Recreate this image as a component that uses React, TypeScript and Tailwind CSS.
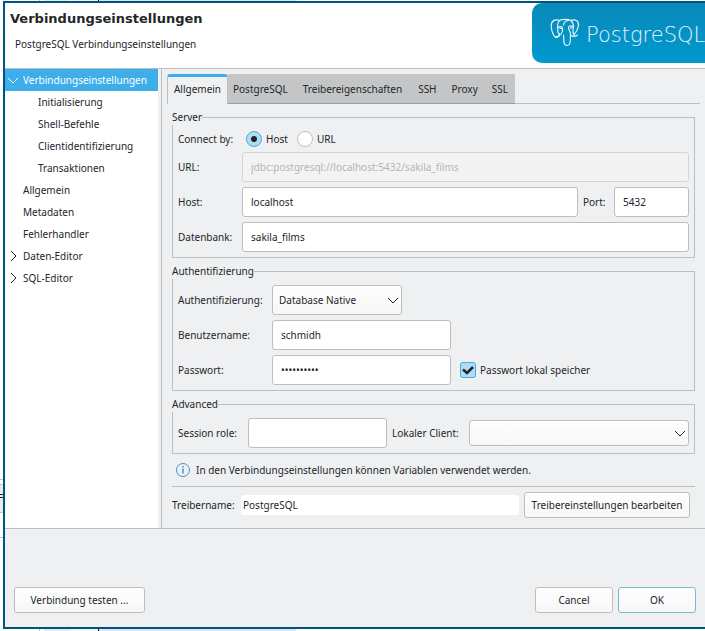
import { useState } from "react";
import type { ReactNode } from "react";
import { clsx } from "clsx";

const inputClass =
  "h-[30px] min-w-0 rounded-[3px] border border-[#bcbebf] bg-white px-2 text-[#232629] outline-none";
const buttonClass =
  "h-[26px] shrink-0 rounded-[3px] border bg-linear-to-b from-[#fefefe] to-[#f7f7f7] text-center whitespace-nowrap";

type TreeItem = { label: string; depth: number; arrow?: "open" | "closed" };

const tree: TreeItem[] = [
  { label: "Verbindungseinstellungen", depth: 0, arrow: "open" },
  { label: "Initialisierung", depth: 1 },
  { label: "Shell-Befehle", depth: 1 },
  { label: "Clientidentifizierung", depth: 1 },
  { label: "Transaktionen", depth: 1 },
  { label: "Allgemein", depth: 0 },
  { label: "Metadaten", depth: 0 },
  { label: "Fehlerhandler", depth: 0 },
  { label: "Daten-Editor", depth: 0, arrow: "closed" },
  { label: "SQL-Editor", depth: 0, arrow: "closed" },
];

const tabs = ["Allgemein", "PostgreSQL", "Treibereigenschaften", "SSH", "Proxy", "SSL"];

function Chevron({ open }: { open: boolean }) {
  return (
    <svg width="12" height="12" viewBox="0 0 12 12" fill="none" stroke="currentColor" aria-hidden="true">
      <path d={open ? "M1 4 L6 9 L11 4" : "M4 1 L9 6 L4 11"} />
    </svg>
  );
}

function Elephant() {
  return (
    <svg width="30" height="30" viewBox="0 0 30 30" fill="none" stroke="#e3f4fb" strokeWidth="1.2" strokeLinecap="round" aria-hidden="true">
      <path d="M9.500 2.500C5 .5 1 3 1.200 8c.3 4 1.800 9 4 11 1.800 1.500 3-1 4.300-3" />
      <path d="M9.500 2.500C12 1 18 1 21 2.500c4-1.800 8 0 7.500 5-.5 4-2.500 7-4.500 9.500" />
      <path d="M9.500 2.500C7.500 5 7.300 8 7.800 11c.2 2-1 3.500 1.700 5 1.500 1 0 3-3.500 2.500" />
      <path d="M21 2.500c2.500 3 3.200 6 2 9-.3 2 0 4 1.200 5.500" />
      <path d="M8 9.500c1.500-1.200 4-1.200 4.500.5.5 2 0 4-1.500 6" />
      <path d="M13.500 17c.3 3 0 6 .8 8.500 1 3 5.200 2.500 5.700-.5.400-3 .5-5 .5-8" />
      <path d="M13.500 7c.5-2.500 2.500-4.500 5-4.500" />
      <path d="M23 8.500c-2.500-1.300-4.800-.5-4.500 1.500.3 2 2.500 4 2 7 2 1.800 5 1.500 7 .2" />
      <path d="M10 10.500h1.500M20.500 9.800h1.500" />
    </svg>
  );
}

function Group({ title, children }: { title: string; children: ReactNode }) {
  return (
    <fieldset className="min-w-0 border border-[#bcbebf] px-[5px] pb-[5px]">
      <legend className="-ml-1.5 h-[15px] leading-[15px]">{title}</legend>
      {children}
    </fieldset>
  );
}

function Dropdown({ id, value, className }: { id: string; value: string; className: string }) {
  return (
    <div className={clsx("grid items-center", className)}>
      <select
        id={id}
        defaultValue={value}
        className="col-start-1 row-start-1 h-full w-full appearance-none rounded-[3px] border border-[#bcbebf] bg-linear-to-b from-[#fefefe] to-[#f7f7f7] px-1.5"
      >
        <option>{value}</option>
      </select>
      <span className="pointer-events-none col-start-1 row-start-1 mr-[3px] justify-self-end">
        <Chevron open />
      </span>
    </div>
  );
}

function Radio({ label, checked, onChange }: { label: string; checked: boolean; onChange: () => void }) {
  return (
    <label className="flex items-center gap-1">
      <span className="grid place-items-center">
        <input
          type="radio"
          name="connect-by"
          checked={checked}
          onChange={onChange}
          className="peer col-start-1 row-start-1 size-4 appearance-none rounded-full border border-[#bcbebf] bg-white checked:border-[#3daee9] checked:bg-[#b3dcf2]"
        />
        <span className="pointer-events-none col-start-1 row-start-1 hidden size-1.5 rounded-full bg-[#232629] peer-checked:block" />
      </span>
      {label}
    </label>
  );
}

function Header() {
  return (
    <header className="flex h-[66px] shrink-0 justify-between overflow-hidden border-b border-[#bcbebf] bg-white">
      <div className="pl-[5px] pt-2">
        <h1 className="font-['DejaVu_Sans',sans-serif] text-[13px] leading-4 font-bold">Verbindungseinstellungen</h1>
        <p className="mt-[9px] pl-[5px] leading-4">PostgreSQL Verbindungseinstellungen</p>
      </div>
      <div className="flex h-[60px] w-[173px] items-center gap-1.5 overflow-hidden rounded-l-[10px] bg-linear-to-b from-[#088ab8] to-[#0099d0] pl-[18px] text-[#e3f4fb]">
        <span className="shrink-0">
          <Elephant />
        </span>
        <span className="pt-1 font-['DejaVu_Sans',sans-serif] text-[21px] leading-6 font-extralight whitespace-nowrap">
          PostgreSQL
        </span>
      </div>
    </header>
  );
}

function Sidebar() {
  return (
    <nav className="mr-[3px] w-[153px] shrink-0 bg-white">
      <ul>
        {tree.map((item, index) => (
          <li key={item.label + index}>
            <button
              type="button"
              className={clsx(
                "flex h-[22px] w-full items-center pl-0.5 text-left",
                index === 0 && "bg-[#3daee9] text-white",
              )}
            >
              <span className={clsx("shrink-0", item.depth === 0 ? "w-4" : "w-[31px]")}>
                {item.arrow && <Chevron open={item.arrow === "open"} />}
              </span>
              {item.label}
            </button>
          </li>
        ))}
      </ul>
    </nav>
  );
}

function Tabs() {
  return (
    <div role="tablist" className="flex h-[30px]">
      {tabs.map((tab, index) => (
        <button
          key={tab}
          type="button"
          role="tab"
          aria-selected={index === 0}
          className={clsx(
            index === 0
              ? "w-[61px] rounded-t-[3px] border-x border-t-3 border-x-[#bcbebf] border-t-[#3daee9] pb-[3px]"
              : "border-b border-[#9b9d9f] bg-[#c4c5c6]",
            index === 1 && "pr-[7px] pl-[5px]",
            (index === 2 || index === 3) && "px-2",
            index > 3 && "px-[7px]",
          )}
        >
          {tab}
        </button>
      ))}
      <div className="mr-[5px] grow border-b border-[#bcbebf]" />
    </div>
  );
}

function GeneralPage() {
  const [connectBy, setConnectBy] = useState("host");
  return (
    <div className="flex flex-col gap-1.5 px-2.5 pt-1.5">
      <Group title="Server">
        <div className="flex h-[27px] items-center">
          <span className="w-[68px]">Connect by:</span>
          <div className="flex gap-[9px]">
            <Radio label="Host" checked={connectBy === "host"} onChange={() => setConnectBy("host")} />
            <Radio label="URL" checked={connectBy === "url"} onChange={() => setConnectBy("url")} />
          </div>
        </div>
        <div className="grid grid-cols-[64px_1fr] items-center gap-y-[5px]">
          <label htmlFor="url">URL:</label>
          <input
            id="url"
            disabled
            defaultValue="jdbc:postgresql://localhost:5432/sakila_films"
            className="h-[30px] min-w-0 rounded-[3px] border border-[#d3d5d6] bg-[#f3f3f3] px-2 text-[#b4b5b6]"
          />
          <label htmlFor="host">Host:</label>
          <div className="flex items-center">
            <input id="host" defaultValue="localhost" className={clsx(inputClass, "flex-1")} />
            <label htmlFor="port" className="w-9 pl-[5px]">Port:</label>
            <input id="port" defaultValue="5432" className={clsx(inputClass, "w-[75px]")} />
          </div>
          <label htmlFor="database">Datenbank:</label>
          <input id="database" defaultValue="sakila_films" className={inputClass} />
        </div>
      </Group>

      <Group title="Authentifizierung">
        <div className="grid grid-cols-[94px_179px_1fr] items-center gap-y-[5px] pt-1.5">
          <label htmlFor="auth">Authentifizierung:</label>
          <Dropdown id="auth" value="Database Native" className="h-[30px] w-[130px]" />
          <span />
          <label htmlFor="user">Benutzername:</label>
          <input id="user" defaultValue="schmidh" className={inputClass} />
          <span />
          <label htmlFor="password">Passwort:</label>
          <input id="password" type="password" defaultValue="geheim1234" className={inputClass} />
          <label className="flex items-center gap-1 pl-[9px]">
            <span className="grid place-items-center">
              <input
                type="checkbox"
                defaultChecked
                className="peer col-start-1 row-start-1 size-4 appearance-none rounded-[3px] border border-[#bcbebf] bg-white checked:border-[#3daee9] checked:bg-[#b3dcf2]"
              />
              <svg
                width="12"
                height="12"
                viewBox="0 0 12 12"
                fill="none"
                stroke="#232629"
                strokeWidth="2.500"
                aria-hidden="true"
                className="pointer-events-none invisible col-start-1 row-start-1 peer-checked:visible"
              >
                <path d="M1 5.500 L5 9 L11 3" />
              </svg>
            </span>
            Passwort lokal speicher
          </label>
        </div>
      </Group>

      <Group title="Advanced">
        <div className="flex items-center pt-1.5">
          <label htmlFor="role" className="w-[70px]">Session role:</label>
          <input id="role" className={clsx(inputClass, "w-[139px]")} />
          <label htmlFor="client" className="w-[82px] pl-[5px]">Lokaler Client:</label>
          <Dropdown id="client" value="" className="h-[26px] flex-1" />
        </div>
      </Group>

      <div>
        <p className="flex h-5 items-center gap-1.5 pl-1">
          <svg width="14" height="14" viewBox="0 0 14 14" fill="none" stroke="#3f93cc" aria-hidden="true">
            <circle cx="7" cy="7" r="6.500" />
            <path d="M7 3v1.500M7 5.500v5" strokeWidth="1.500" />
          </svg>
          In den Verbindungseinstellungen können Variablen verwendet werden.
        </p>
        <hr className="mt-1.5 border-[#bcbebf]" />
        <div className="flex items-center pt-[5px] pr-[5px]">
          <label htmlFor="driver" className="w-[69px]">Treibername:</label>
          <input
            id="driver"
            readOnly
            defaultValue="PostgreSQL"
            className="mr-[5px] h-5 min-w-0 flex-1 rounded-[3px] bg-white px-0.5 outline-none"
          />
          <button type="button" className={clsx(buttonClass, "w-[166px] border-[#bcbebf]")}>
            Treibereinstellungen bearbeiten
          </button>
        </div>
      </div>
    </div>
  );
}

/* Sliver of the editor's data grid that shows past the dialog's edge. */
function GridSliver({ className }: { className: string }) {
  return (
    <div className={clsx("flex pl-[39px]", className)}>
      <div className="w-[5px] border-l border-[#bcbebf]" />
      <div className="w-[25px] bg-[#e9e9e4]" />
      <div className="w-[29px] bg-[#f3f3f3]" />
      <div className="w-px bg-black" />
      <div className="w-[197px] bg-[#dce4f1]" />
    </div>
  );
}

export default function App() {
  return (
    <div className="flex h-screen flex-col bg-white font-['Noto_Sans',sans-serif] text-[10px] leading-4 text-[#232629]">
      <GridSliver className="h-px shrink-0" />
      <div className="flex min-h-0 flex-1">
        <div className="flex w-[3px] shrink-0 flex-col justify-end pb-[91px]" aria-hidden="true">
          <div className="h-[5px] border-t border-[#bcbebf]" />
          <div className="h-[29px] border-y border-[#c8c8c8] bg-[#ececea] pt-[9px]">
            <div className="h-1 border-y border-[#232629]" />
          </div>
          <div className="h-[25px] border-b border-[#bcbebf]" />
        </div>
        <div className="flex min-w-0 flex-1 flex-col border-y-2 border-l-2 border-[#00557f] bg-[#eff0f1]">
          <Header />
          <div className="flex min-h-0 flex-1 border-b border-[#bcbebf]">
            <Sidebar />
            <main className="min-w-0 flex-1 border-l border-[#bcbebf] pt-[5px]">
              <div className="pl-[5px]">
                <Tabs />
              </div>
              <GeneralPage />
            </main>
          </div>
          <footer className="flex h-[98px] shrink-0 items-end gap-[5px] px-[9px] pb-3.5">
            <button type="button" className={clsx(buttonClass, "mr-auto w-[131px] border-[#bcbebf]")}>
              Verbindung testen ...
            </button>
            <button type="button" className={clsx(buttonClass, "w-[78px] border-[#bcbebf]")}>
              Cancel
            </button>
            <button type="button" className={clsx(buttonClass, "w-[78px] border-[#7ab8dc]")}>
              OK
            </button>
          </footer>
        </div>
      </div>
      <GridSliver className="h-0.5 shrink-0" />
    </div>
  );
}
